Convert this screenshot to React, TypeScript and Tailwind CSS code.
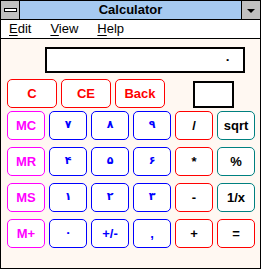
import React from "react";

type Key = {
  label: string;
  border: string;
  text: string;
  digit?: boolean;
};

const RED = "border-[#ff0000]";
const MAG = "border-[#ff00ff]";
const BLUE = "border-[#0000ff]";
const TEAL = "border-[#008080]";

const keys: Key[] = [
  { label: "MC", border: MAG, text: "text-[#ff00ff]" },
  { label: "۷", border: BLUE, text: "text-[#0000ff]", digit: true },
  { label: "۸", border: BLUE, text: "text-[#0000ff]", digit: true },
  { label: "۹", border: BLUE, text: "text-[#0000ff]", digit: true },
  { label: "/", border: RED, text: "text-black" },
  { label: "sqrt", border: TEAL, text: "text-black" },
  { label: "MR", border: MAG, text: "text-[#ff00ff]" },
  { label: "۴", border: BLUE, text: "text-[#0000ff]", digit: true },
  { label: "۵", border: BLUE, text: "text-[#0000ff]", digit: true },
  { label: "۶", border: BLUE, text: "text-[#0000ff]", digit: true },
  { label: "*", border: RED, text: "text-black" },
  { label: "%", border: TEAL, text: "text-black" },
  { label: "MS", border: MAG, text: "text-[#ff00ff]" },
  { label: "۱", border: BLUE, text: "text-[#0000ff]", digit: true },
  { label: "۲", border: BLUE, text: "text-[#0000ff]", digit: true },
  { label: "۳", border: BLUE, text: "text-[#0000ff]", digit: true },
  { label: "-", border: RED, text: "text-black" },
  { label: "1/x", border: TEAL, text: "text-black" },
  { label: "M+", border: MAG, text: "text-[#ff00ff]" },
  { label: "۰", border: BLUE, text: "text-[#0000ff]", digit: true },
  { label: "+/-", border: BLUE, text: "text-[#0000ff]" },
  { label: ",", border: BLUE, text: "text-[#0000ff]" },
  { label: "+", border: RED, text: "text-black" },
  { label: "=", border: RED, text: "text-black" },
];

const CalcKey = ({ k }: { k: Key }) => (
  <div
    className={`h-[29px] rounded-[5px] border bg-white flex items-center justify-center font-bold ${k.border} ${k.text} ${
      k.digit
        ? "text-[11px] font-['DejaVu_Sans',sans-serif]"
        : "text-[13px] font-['Liberation_Sans',Arial,sans-serif]"
    }`}
  >
    {k.label}
  </div>
);

const TopKey = ({ label }: { label: string }) => (
  <div className="w-[50px] h-[29px] rounded-[5px] border border-[#ff0000] bg-white flex items-center justify-center text-[13px] font-bold text-[#ff0000]">
    {label}
  </div>
);

export default function App() {
  return (
    <div className="w-[261px] h-[269px] border border-black bg-[#fff8f2] flex flex-col font-['Liberation_Sans',Arial,sans-serif] select-none">
      {/* title bar */}
      <div className="h-[19px] shrink-0 flex border-b border-black bg-[#a6caf0]">
        <div className="w-[19px] border-r border-black bg-[#c0c0c0] flex items-center justify-center">
          <div className="w-[13px] h-[4px] bg-white border border-black" />
        </div>
        <div className="flex-1 flex items-center justify-center text-[13px] font-bold text-black">
          Calculator
        </div>
        <div className="w-[19px] border-l border-black bg-[#c0c0c0] flex items-center justify-center border-b-[#808080]">
          <div className="w-0 h-0 border-l-[4px] border-r-[4px] border-t-[4px] border-l-transparent border-r-transparent border-t-black mt-[1px]" />
        </div>
      </div>

      {/* menu */}
      <div className="h-[19px] shrink-0 flex items-center gap-[19px] pl-[8px] bg-white border-b border-black text-[13px] text-black">
        <span>
          <span className="underline underline-offset-2">E</span>dit
        </span>
        <span>
          <span className="underline underline-offset-2">V</span>iew
        </span>
        <span>
          <span className="underline underline-offset-2">H</span>elp
        </span>
      </div>

      {/* display */}
      <div className="mt-[8px] pl-[44px]">
        <div className="w-[200px] h-[26px] border-2 border-black bg-white flex items-center justify-end pr-[12px] text-[11px] font-bold font-['DejaVu_Sans',sans-serif]">
          ٠
        </div>
      </div>

      {/* top row */}
      <div className="mt-[6px] pl-[6px] flex items-start">
        <div className="flex gap-[4px]">
          <TopKey label="C" />
          <TopKey label="CE" />
          <TopKey label="Back" />
        </div>
        <div className="ml-[28px] mt-[2px] w-[41px] h-[27px] border-2 border-black bg-white" />
      </div>

      {/* keypad */}
      <div className="mt-[3px] pl-[6px] grid grid-cols-[repeat(6,38px)] gap-x-[4px] gap-y-[7px]">
        {keys.map((k, i) => (
          <CalcKey key={i} k={k} />
        ))}
      </div>
    </div>
  );
}
